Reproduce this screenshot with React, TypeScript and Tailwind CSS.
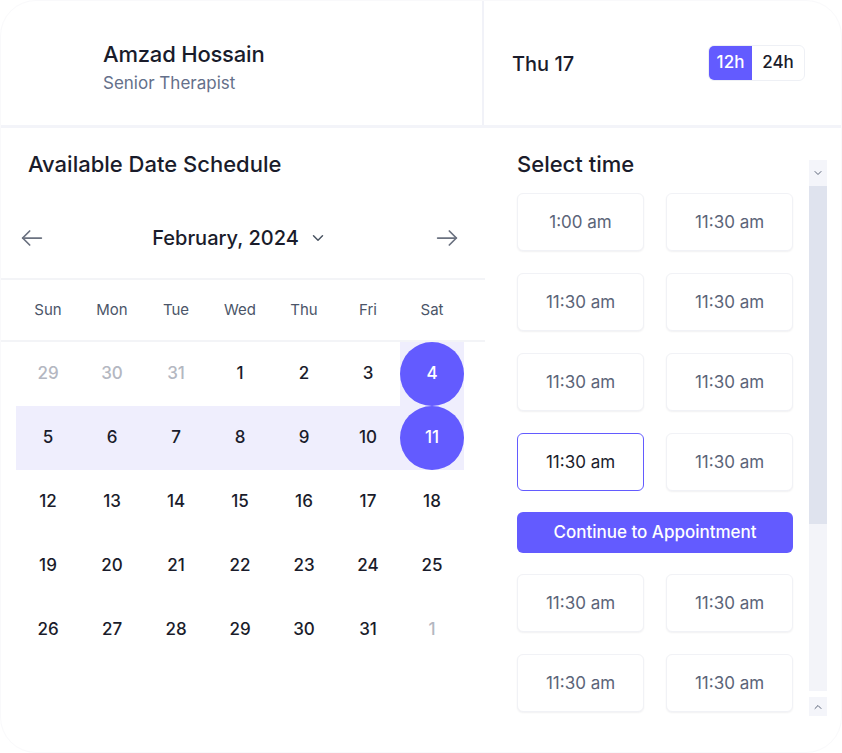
import { ChevronDown, ChevronUp } from "lucide-react";

const FONT = { fontFamily: "Inter, 'Noto Sans', sans-serif" };

type Day = { n: number; muted?: boolean };

const weeks: Day[][] = [
  [{ n: 29, muted: true }, { n: 30, muted: true }, { n: 31, muted: true }, { n: 1 }, { n: 2 }, { n: 3 }, { n: 4 }],
  [{ n: 5 }, { n: 6 }, { n: 7 }, { n: 8 }, { n: 9 }, { n: 10 }, { n: 11 }],
  [{ n: 12 }, { n: 13 }, { n: 14 }, { n: 15 }, { n: 16 }, { n: 17 }, { n: 18 }],
  [{ n: 19 }, { n: 20 }, { n: 21 }, { n: 22 }, { n: 23 }, { n: 24 }, { n: 25 }],
  [{ n: 26 }, { n: 27 }, { n: 28 }, { n: 29 }, { n: 30 }, { n: 31 }, { n: 1, muted: true }],
];

const dayNames = ["Sun", "Mon", "Tue", "Wed", "Thu", "Fri", "Sat"];

function ArrowLeft() {
  return (
    <svg width="28" height="28" viewBox="0 0 24 24" fill="none" stroke="#6b7280" strokeWidth="1.5" strokeLinecap="round" strokeLinejoin="round">
      <path d="M20 12H4" />
      <path d="M10 6l-6 6 6 6" />
    </svg>
  );
}

function ArrowRight() {
  return (
    <svg width="28" height="28" viewBox="0 0 24 24" fill="none" stroke="#6b7280" strokeWidth="1.5" strokeLinecap="round" strokeLinejoin="round">
      <path d="M4 12h16" />
      <path d="M14 6l6 6-6 6" />
    </svg>
  );
}

function Slot({ label, active }: { label: string; active?: boolean }) {
  return (
    <div
      className={`flex h-[58px] items-center justify-center rounded-md border bg-white pt-[2px] text-[17px] ${
        active
          ? "border-[#635bff] text-[#1a1c2b]"
          : "border-[#f1f2f6] text-[#5b6478] shadow-[0_1px_2px_rgba(16,24,40,0.06)]"
      }`}
    >
      {label}
    </div>
  );
}

export default function App() {
  return (
    <div className="h-[753px] w-[842px] bg-white text-[#1a1c2b]" style={FONT}>
      <div className="flex h-full w-full flex-col overflow-hidden rounded-[36px] border border-[#f9f9fb] bg-white">
        {/* ── header ─────────────────────────────────────────────── */}
        <div className="flex h-[127px] flex-shrink-0 border-b-[3px] border-[#f3f4f9]">
          <div className="flex w-[483px] flex-col border-r-2 border-[#f1f2f8] pl-[102px] pt-[39px]">
            <p className="text-[22px] font-medium leading-[28px] tracking-[-0.2px]">Amzad Hossain</p>
            <p className="mt-[4px] text-[17px] leading-[22px] text-[#64708a]">Senior Therapist</p>
          </div>
          <div className="flex flex-1 items-center justify-between pl-[28px] pr-[36px]">
            <p className="pt-[2px] text-[20px] font-medium">Thu 17</p>
            <div className="flex h-[36px] overflow-hidden rounded-md border border-[#eef0f5] text-[17px] font-medium">
              <span className="flex w-[43px] items-center justify-center bg-[#635bff] text-white">12h</span>
              <span className="flex w-[52px] items-center justify-center text-[#1a1c2b]">24h</span>
            </div>
          </div>
        </div>

        {/* ── body ───────────────────────────────────────────────── */}
        <div className="flex flex-1">
          {/* calendar */}
          <div className="w-[484px] flex-shrink-0">
            <h2 className="px-[27px] pt-[22px] text-[22px] font-medium leading-[28px]">Available Date Schedule</h2>
            <div className="mt-[40px] flex h-[40px] items-center justify-between pl-[17px] pr-[24px]">
              <ArrowLeft />
              <div className="flex items-center gap-[10px] text-[20px] font-medium">
                February, 2024
                <ChevronDown className="h-[18px] w-[18px] text-[#4b5563]" strokeWidth={2} />
              </div>
              <ArrowRight />
            </div>
            <div className="mt-[20px] border-y-2 border-[#f3f4f7]">
              <div className="ml-[15px] grid h-[60px] w-[448px] grid-cols-7 items-center text-[15px] text-[#4b5568]">
                {dayNames.map((d) => (
                  <span key={d} className="text-center">{d}</span>
                ))}
              </div>
            </div>
            <div className="ml-[15px] w-[448px]">
              {weeks.map((week, wi) => (
                <div key={wi} className={`grid h-[64px] grid-cols-7 ${wi === 1 ? "bg-[#efeefd]" : ""}`}>
                  {week.map((d, di) => {
                    const selected = di === 6 && (wi === 0 || wi === 1);
                    return (
                      <div
                        key={di}
                        className={`flex items-center justify-center ${selected && wi === 0 ? "bg-[#efeefd]" : ""}`}
                      >
                        {selected ? (
                          <span className="flex h-[64px] w-[64px] items-center justify-center rounded-full bg-[#635bff] text-[17px] font-medium text-white">
                            {d.n}
                          </span>
                        ) : (
                          <span className={`text-[17px] font-medium ${d.muted ? "text-[#b4b7c1]" : "text-[#1a1c2b]"}`}>
                            {d.n}
                          </span>
                        )}
                      </div>
                    );
                  })}
                </div>
              ))}
            </div>
          </div>

          {/* times */}
          <div className="flex flex-1 pl-[32px]">
            <div className="w-[276px]">
              <h2 className="pt-[22px] text-[22px] font-medium leading-[28px]">Select time</h2>
              <div className="mt-[15px] grid grid-cols-2 gap-x-[22px] gap-y-[22px]">
                <Slot label="1:00 am" />
                <Slot label="11:30 am" />
                <Slot label="11:30 am" />
                <Slot label="11:30 am" />
                <Slot label="11:30 am" />
                <Slot label="11:30 am" />
                <Slot label="11:30 am" active />
                <Slot label="11:30 am" />
                <button className="col-span-2 -my-px h-[41px] rounded-md bg-[#635bff] text-[17px] font-medium text-white">
                  Continue to Appointment
                </button>
                <Slot label="11:30 am" />
                <Slot label="11:30 am" />
                <Slot label="11:30 am" />
                <Slot label="11:30 am" />
              </div>
            </div>

            {/* scrollbar */}
            <div className="ml-[16px] mt-[32px] flex w-[18px] flex-col">
              <div className="flex h-[26px] items-center justify-center bg-[#f4f5fa]">
                <ChevronDown className="h-[12px] w-[12px] text-[#5b6478]" strokeWidth={2} />
              </div>
              <div className="h-[338px] bg-[#dfe3ee]" />
              <div className="h-[167px] bg-[#f3f4f9]" />
              <div className="mt-[6px] flex h-[19px] items-center justify-center bg-[#f4f5fa]">
                <ChevronUp className="h-[12px] w-[12px] text-[#5b6478]" strokeWidth={2} />
              </div>
            </div>
          </div>
        </div>
      </div>
    </div>
  );
}
